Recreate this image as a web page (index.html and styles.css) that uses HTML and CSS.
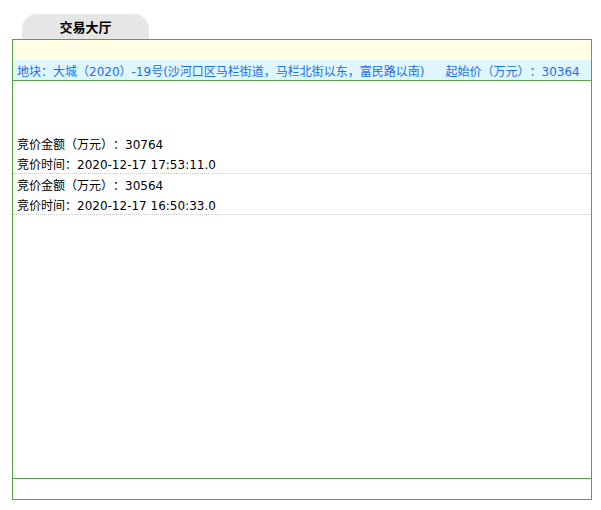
FILE: index.html
```html
<!DOCTYPE html>
<html lang="zh-CN">
<head>
<meta charset="utf-8">
<title>交易大厅</title>
<link rel="stylesheet" href="styles.css">
</head>
<body>
<div class="page">
  <div class="tab">交易大厅</div>
  <div class="box">
    <div class="band-yellow"></div>
    <div class="band-info">
      <span class="plot">地块：大城（2020）-19号(沙河口区马栏街道，马栏北街以东，富民路以南)</span>
      <span class="start">起始价（万元）：30364</span>
    </div>
    <div class="content">
      <div class="bid">
        <div class="line">竞价金额（万元）：30764</div>
        <div class="line">竞价时间：2020-12-17 17:53:11.0</div>
      </div>
      <div class="bid">
        <div class="line">竞价金额（万元）：30564</div>
        <div class="line">竞价时间：2020-12-17 16:50:33.0</div>
      </div>
    </div>
    <div class="footer"></div>
  </div>
</div>
</body>
</html>
```
FILE: styles.css
```css
html, body {
  margin: 0;
  padding: 0;
  background: #ffffff;
}
body {
  font-family: "DejaVu Sans", "Noto Sans CJK SC", sans-serif;
  font-size: 12px;
  color: #000;
  text-spacing-trim: space-all;
}
.page {
  padding: 14px 0 0 12px;
}
.tab {
  margin-left: 10px;
  width: 127px;
  height: 25px;
  background: #e6e6e6;
  border-radius: 15px 15px 0 0;
  display: flex;
  align-items: center;
  justify-content: center;
  font-weight: bold;
  font-size: 13px;
  font-family: "Noto Sans CJK SC", sans-serif;
}
.box {
  width: 578px;
  border: 1px solid #58a348;
}
.band-yellow {
  height: 20px;
  background: #ffffe6;
}
.band-info {
  height: 20px;
  background: #e0f6fd;
  border-bottom: 1px solid #58a348;
  display: flex;
  align-items: center;
  padding-left: 4px;
  color: #1a6ef0;
  white-space: nowrap;
}
.start {
  margin-left: 21px;
}
.content {
  height: 397px;
  padding-top: 52px;
  box-sizing: border-box;
}
.bid {
  border-bottom: 1px dotted #c8c8c8;
}
.line {
  height: 18px;
  line-height: 20px;
  padding-top: 2px;
  padding-left: 4px;
  white-space: nowrap;
  overflow: hidden;
}
.footer {
  height: 20px;
  border-top: 1px solid #58a348;
}
```
